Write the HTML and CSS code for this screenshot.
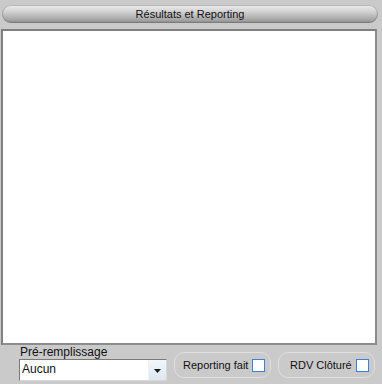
FILE: index.html
```html
<!DOCTYPE html>
<html lang="fr">
<head>
  <meta charset="UTF-8">
  <meta name="viewport" content="width=device-width, initial-scale=1.0">
  <title>Résultats et Reporting</title>
  <link rel="stylesheet" href="styles.css">
</head>
<body>

  <div class="window">
    <!-- Title bar -->
    <div class="title-bar">Résultats et Reporting</div>

    <!-- Results area -->
    <div class="results-box"></div>

    <!-- Bottom controls -->
    <div class="bottom-bar">
      <div class="prefill">
        <label class="prefill-label">Pré-remplissage</label>
        <div class="combo">
          <span class="combo-value">Aucun</span>
          <span class="combo-btn">
            <svg width="7" height="4" viewBox="0 0 7 4"><path d="M0 0h7L3.5 4z" fill="#1a1a1a"/></svg>
          </span>
        </div>
      </div>

      <div class="check-group">
        <span class="check-label">Reporting fait</span>
        <span class="check-box"></span>
      </div>

      <div class="check-group">
        <span class="check-label">RDV Clôturé</span>
        <span class="check-box"></span>
      </div>
    </div>
  </div>

</body>
</html>
```

FILE: styles.css
```css
body {
  font-family: "Liberation Sans", Arial, sans-serif;
  font-size: 12px;
  background-color: #cacaca;
  margin: 0;
  color: #111;
}
.window {
  width: 382px;
  height: 384px;
  padding: 5px 0 0 0;
  box-sizing: border-box;
}
.title-bar {
  margin: 0 4px 0 2px;
  height: 18px;
  line-height: 18px;
  border-radius: 9px;
  text-align: center;
  font-size: 11px;
  background: linear-gradient(#eeeeee, #cfcfcf 40%, #a2a2a2 85%, #878787);
  box-shadow: inset 0 0 0 1px rgba(90, 90, 90, 0.35);
}
.results-box {
  margin: 6px 0 0 1px;
  width: 376px;
  height: 316px;
  box-sizing: border-box;
  background-color: white;
  border: 2px solid #7f7f7f;
  border-right-color: #8c8c8c;
  border-bottom-color: #8c8c8c;
}
.bottom-bar {
  display: flex;
  align-items: flex-end;
  padding: 0 0 0 19px;
}
.prefill {
  display: flex;
  flex-direction: column;
  width: 148px;
}
.prefill-label {
  padding-left: 1px;
  height: 13px;
  line-height: 13px;
  margin-top: 1px;
}
.combo {
  display: flex;
  height: 22px;
  box-sizing: border-box;
  margin-bottom: 4px;
  background-color: white;
  border: 1px solid #7a7a7a;
  border-right-color: #d8d8d8;
  border-bottom-color: #d8d8d8;
}
.combo-value {
  flex: 1;
  line-height: 19px;
  padding-left: 2px;
}
.combo-btn {
  width: 17px;
  display: flex;
  align-items: center;
  justify-content: center;
  padding-top: 2px;
  background: linear-gradient(#f4f7fb, #dde6f2);
  border-left: 1px solid #eef2f8;
}
.check-group {
  display: flex;
  align-items: center;
  width: 97px;
  height: 26px;
  box-sizing: border-box;
  margin: 0 0 7px 7px;
  padding: 0 5px 0 8px;
  border: 1px solid #dfdfdf;
  border-radius: 10px;
  white-space: nowrap;
  font-size: 11px;
}
.check-group + .check-group {
  padding-left: 11px;
}
.check-label {
  flex: 1;
}
.check-box {
  flex: none;
  width: 13px;
  height: 13px;
  box-sizing: border-box;
  background-color: white;
  border: 1px solid #3d7ee6;
}
```
